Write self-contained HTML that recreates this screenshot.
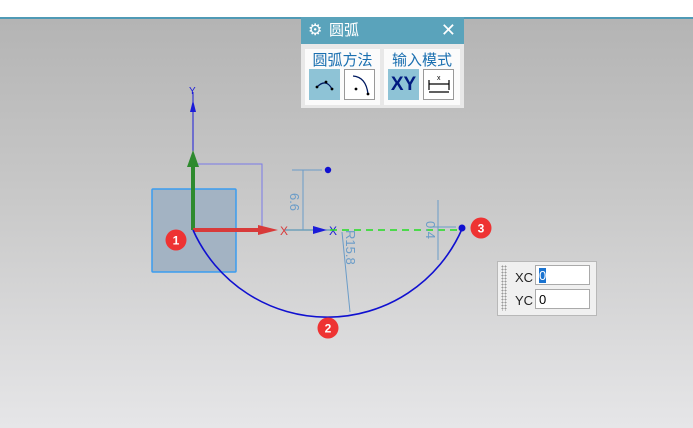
<!DOCTYPE html>
<html><head><meta charset="utf-8"><style>
body{margin:0;width:693px;height:428px;overflow:hidden;position:relative;font-family:"Liberation Sans","Noto Sans CJK SC",sans-serif;background:#fff}
#vp{position:absolute;left:0;top:19px;width:693px;height:409px;background:linear-gradient(#b4b4b4,#c9c9c9 45%,#e6e6e8)}
#bar{position:absolute;left:0;top:17px;width:693px;height:2px;background:#4f9ab5}
.dlg{position:absolute;left:301px;top:17px;width:163px;height:91px;background:#e8e8e8;overflow:hidden}
.hd{height:27px;background:#5aa3bb;color:#fff;font-size:15px;line-height:27px;padding-left:28px;position:relative}
.grp{position:absolute;top:32px;background:#fbfbfb;height:56px}
.grp .t{color:#1a6fb0;font-size:15px;text-align:center;margin-top:0px}
.b{position:absolute;top:20px;width:31px;height:31px;box-sizing:border-box}
.in{position:absolute;left:497px;top:261px;width:98px;height:53px;background:#f0f0f0;border:1px solid #b8b8b8;font-size:13px}
.in .f{position:absolute;left:37px;width:55px;height:20px;box-sizing:border-box;border:1px solid #aaa;background:#fff;font:13px "Liberation Sans",sans-serif;padding:2px 3px;line-height:15px}
.lb{position:absolute;left:17px;color:#222}
</style></head><body>
<div id="vp"></div><div id="bar"></div>
<svg width="693" height="428" style="position:absolute;left:0;top:0">
<rect x="152" y="189" width="84" height="83" fill="#a3b3c3" stroke="#3a9cf0" stroke-width="1.5" rx="1"/>
<polyline points="193,164 262,164 262,230" fill="none" stroke="#7a7ae8" stroke-width="1"/>
<line x1="193" y1="92" x2="193" y2="160" stroke="#1b1bd9" stroke-width="1"/>
<polygon points="193,100 190,112 196,112" fill="#1b1bd9"/>
<text x="189" y="94" font-size="10" fill="#1b1bd9">Y</text>
<line x1="193" y1="165" x2="193" y2="230" stroke="#2e8a2e" stroke-width="4"/>
<polygon points="193,150 187,167 199,167" fill="#2e8a2e"/>
<line x1="193" y1="230" x2="262" y2="230" stroke="#d83a3a" stroke-width="4"/>
<polygon points="278,230 258,225 258,235" fill="#d83a3a"/>
<text x="280" y="235" font-size="12" fill="#d83a3a">X</text>
<line x1="285" y1="230" x2="330" y2="230" stroke="#3f8ab0" stroke-width="1"/>
<polygon points="327,230 313,226 313,234" fill="#1b1bd9"/>
<text x="329" y="235" font-size="12" fill="#1b1bd9">X</text>
<line x1="330" y1="230" x2="462" y2="230" stroke="#22dd22" stroke-width="1.5" stroke-dasharray="7,5"/>
<path d="M193 230 A147 147 0 0 0 462 229" fill="none" stroke="#1010d0" stroke-width="1.6"/>
<circle cx="462" cy="228" r="3.5" fill="#1010d0"/>
<circle cx="328" cy="170" r="3.2" fill="#1010d0"/>
<g stroke="#6a9cc8" stroke-width="1" fill="none">
<line x1="292" y1="170" x2="322" y2="170"/><line x1="303" y1="170" x2="303" y2="230"/>
<line x1="342" y1="232" x2="350" y2="312"/>
<line x1="438" y1="200" x2="438" y2="260"/><line x1="430" y1="227" x2="456" y2="227"/>
</g>
<text transform="translate(290,202) rotate(90)" font-size="13" fill="#6a9cc8" text-anchor="middle">6.6</text>
<text transform="translate(346,230) rotate(90)" font-size="13" fill="#6a9cc8">R15.8</text>
<text transform="translate(426,230) rotate(90)" font-size="13" fill="#6a9cc8" text-anchor="middle">0.4</text>
<g font-size="12" font-weight="bold" fill="#fff" text-anchor="middle">
<circle cx="176" cy="240" r="10.5" fill="#e33"/><text x="176" y="244.5">1</text>
<circle cx="328" cy="328" r="10.5" fill="#e33"/><text x="328" y="332.5">2</text>
<circle cx="481" cy="228" r="10.5" fill="#e33"/><text x="481" y="232.5">3</text>
</g>
</svg>
<div class="dlg">
<div class="hd"><span style="position:absolute;left:7px;font-size:16px">⚙</span>圆弧<span style="position:absolute;right:8px;font-size:18px">✕</span></div>
<div class="grp" style="left:4px;width:75px"><div class="t">圆弧方法</div>
<div class="b" style="left:4px;background:#8ec3d6"><svg width="31" height="31"><path d="M8 18 Q17 9 23 20" fill="none" stroke="#001a60" stroke-width="1.3"/><circle cx="8" cy="18" r="1.4"/><circle cx="17" cy="13" r="1.4"/><circle cx="23" cy="20" r="1.4"/></svg></div>
<div class="b" style="left:39px;border:1px solid #999;background:#fff"><svg width="29" height="29"><path d="M8 6 Q21 7 23 24" fill="none" stroke="#001a60" stroke-width="1.3"/><circle cx="11" cy="19" r="1.4"/><circle cx="23" cy="24" r="1.4"/></svg></div>
</div>
<div class="grp" style="left:83px;width:76px"><div class="t">输入模式</div>
<div class="b" style="left:4px;background:#8ec3d6;color:#001a80;font-size:19px;font-weight:bold;text-align:center;line-height:31px">XY</div>
<div class="b" style="left:39px;border:1px solid #999;background:#fff"><svg width="29" height="29"><path d="M5 10v10M25 10v10M5 14h20M5 22h20" stroke="#000" stroke-width="1.2"/><text x="13" y="10" font-size="7">x</text></svg></div>
</div>
</div>
<div class="in">
<div style="position:absolute;left:3px;top:3px;width:6px;height:46px;background:radial-gradient(#999 40%,transparent 45%) 0 0/3px 3px"></div>
<span class="lb" style="top:8px">XC</span><div class="f" style="top:3px"><span style="background:#1a73d0;color:#fff">0</span></div>
<span class="lb" style="top:31px">YC</span><div class="f" style="top:27px">0</div>
</div>
</body></html>
